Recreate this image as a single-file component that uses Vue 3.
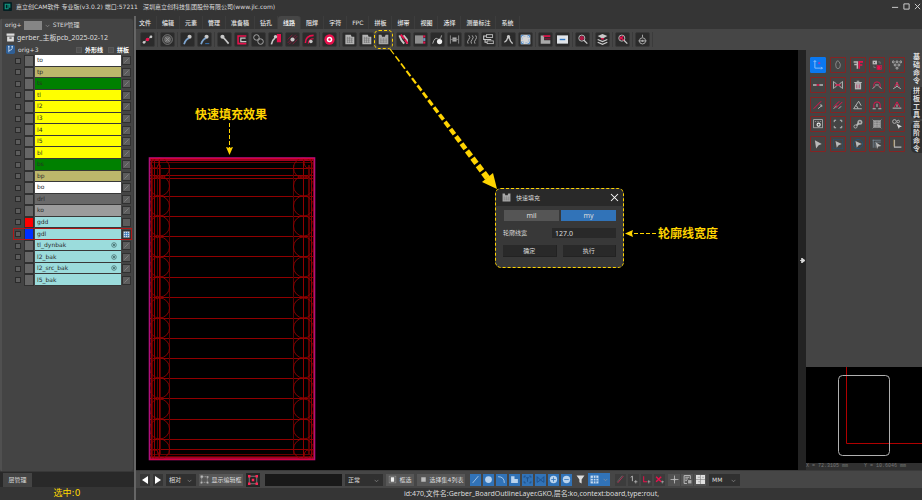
<script setup>
import { ref } from 'vue'

const menus = ['文件', '编辑', '元素', '管理', '准备稿', '钻孔', '线路', '阻焊', '字符', 'FPC', '拼板', '绑带', '视图', '选择', '测量标注', '系统']
const activeMenu = ref('线路')

const W = '#c8c8c8'
const G = '#8c8c8c'
const R = '#e8104c'
const B = '#7fa6d0'

const line = (d, c = W, w = 1.4) => `<path d="${d}" fill="none" stroke="${c}" stroke-width="${w}"/>`
const fill = (d, c = W) => `<path d="${d}" fill="${c}"/>`
const dot = (x, y, r, c = W) => `<circle cx="${x}" cy="${y}" r="${r}" fill="${c}"/>`
const ring = (x, y, r, c = W, w = 1.4) => `<circle cx="${x}" cy="${y}" r="${r}" fill="none" stroke="${c}" stroke-width="${w}"/>`
const box = (x, y, w, h, c = W) => `<rect x="${x}" y="${y}" width="${w}" height="${h}" fill="${c}"/>`
const frame = (x, y, w, h, c = W, s = 1.2) => `<rect x="${x}" y="${y}" width="${w}" height="${h}" fill="none" stroke="${c}" stroke-width="${s}"/>`

const gridBoard = fill('M2 1h8l1 3h4v11H2z', '#b4b4b4') + line('M5 4v9M8 4v9M11 6v7M4 6h9M4 9h9M4 12h9', '#6c6c6c', 0.8)
const fillBoard = fill('M1 1h4l1 3h4l1-3h4v14H1z', '#a8a8a8') + line('M4 6v7M8 6v7M12 6v7M3 9h10M3 12h10', '#777', 0.7)
const lens = (c) => ring(7, 6, 4.4, W, 1.3) + line('M10 9l5 5', W, 1.8) + c

const toolGroups = [
  [{ n: '连线', i: line('M2 13L14 3', W, 1.2) + dot(3, 12, 2) + dot(13, 4, 2) + dot(8, 8, 2.6, R) }],
  [{ n: '禁用', i: ring(8, 8, 7, G, 1.2) + dot(8, 8, 5, '#6c6c6c') + line('M5 5l6 6M11 5l-6 6', '#999', 1.2) }],
  [
    { n: '线加宽', i: dot(11, 4, 3) + line('M10 6Q5 8 3 15', B, 2.4) },
    { n: '线减细', i: dot(11, 4, 3) + line('M10 6Q5 8 3 15', B, 2.4) + line('M9 14h6', '#3678bd') }
  ],
  [
    { n: '移线', i: dot(5, 4, 3) + line('M6 5Q9 8 14 14', W, 2.4) },
    { n: '包边', i: line('M15 3H3v11h12', R, 2.2) + line('M14 6H7v5h8', W, 1.8) },
    { n: '相交', i: ring(5, 5, 4, '#aaa') + ring(11, 11, 4, '#aaa') + line('M6 10l4-4', G) },
    { n: '削线', i: box(10, 0, 6, 12, R) + dot(8, 4, 2.5) + line('M7 6Q3 9 2 15', W, 2.4) },
    { n: '等距', i: line('M1 8L8 1M1 13L13 1M3 15L15 3M8 15l7-7', '#a31643', 1) + dot(8, 8, 3) },
    { n: '弧线', i: line('M2 13Q2 2 14 2', R, 2.2) + line('M6 14Q7 7 14 7', R, 1.5) + dot(10, 11, 2.6) }
  ],
  [{ n: '焊环', i: dot(8, 8, 7.5, R) + dot(8, 8, 4, '#fff') + dot(8, 8, 1.8, R) }],
  [{ n: '网格铺铜', i: gridBoard }, { n: '铺铜', i: gridBoard }, { n: '快速填充', i: fillBoard, on: true }],
  [
    { n: '线夹', i: line('M2 2l3 7 4 5M8 2l5 6v6', W, 2.8) + line('M4 1l5 6M10 8l4 6', R, 2.8) },
    { n: '填实', i: box(0, 2, 12, 12, '#8f8f8f') + box(12, 2, 3, 3, R) + box(12, 11, 3, 3, R) + box(12, 6, 3, 4, '#7298c6') },
    { n: '泪滴', i: line('M1 14Q4 4 8 7T14 2', '#aaa') + dot(11, 11, 3.8, '#eee') },
    { n: '间距', i: line('M2 2v12M14 2v12', G) + box(5, 5, 6, 6, '#aaa') + line('M2 8h12', G, 1) },
    { n: '蛇形', i: line('M4 2q3 3 0 6t-1 6M9 2q3 3 0 6t-1 6M14 2q3 3 0 6t-1 6', '#aaa') },
    { n: '补偿', i: frame(5, 1, 9, 4) + frame(6, 10, 9, 4) + line('M5 3H1v5h11M3 8v4h3', '#ccc', 1.6) }
  ],
  [
    { n: '测距', i: dot(8, 4, 2.4) + line('M7 5Q6 10 2 12M9 5q1 6 5 9', W, 2) },
    { n: '轮廓', i: box(1, 1, 14, 14, '#d5d5d5') + '<circle cx="8" cy="8" r="5" fill="none" stroke="#8bb0da" stroke-width="1.400" stroke-dasharray="3 2"/>' + line('M2 5V2h3M11 2h3v3M14 11v3h-3M5 14H2v-3', '#4585c9') }
  ],
  [
    { n: '切角', i: fill('M1 2h5v7h9v5H1z', '#a9a9a9') + line('M5 3h10', R, 2.4) + line('M7 7h8', '#7d1a38', 2) },
    { n: '减除', i: box(0, 2, 16, 12, '#e1e5ea') + box(4, 7, 8, 2, '#2f78c4') }
  ],
  [{ n: '查找', i: lens(dot(7, 6, 3, '#b01845')) }],
  [{ n: '层叠', i: fill('M8 0l7 3-7 4-7-4z') + line('M1 8l7 3 7-3M1 12l7 3 7-3', '#ccc', 1.8) + box(6, 6, 4, 2, R) }],
  [{ n: '检查', i: lens(line('M4 4l6 5M4 8l5-5', R, 2)) }],
  [{ n: '机器人', i: ring(8, 10, 4.5, '#aaa') + line('M8 1v4M2 10h12', '#aaa') + dot(8, 10, 1.6, '#aaa') }]
]

const bud = '#b8b8b8'
const sideTools = [
  { n: '原点', on: true, i: line('M3 1v12h12M1 3l2-2 2 2M13 11l2 2-2 2', '#a9d1ff', 1.2) + dot(10, 5, 1.8, '#a13bb0') },
  { n: '旋转', i: line('M6 2Q3 6 5 12q3 4 6 0 2-5-1-9-2-3-4-1', '#999', 1.2) },
  { n: '镜像', i: line('M1 3h6M2 7h5M7 2v12', bud, 2.4) + line('M10 14V3h6M10 8h5', R, 2.6) },
  { n: '复制', i: box(1, 1, 7, 6, bud) + dot(4, 4, 1, '#444') + dot(11, 12, 3, R) + frame(8, 9, 7, 6, R, 1) + line('M10 3h3v3M3 9v3h3', G, 1) },
  { n: '阵列', i: ring(2, 3, 1.6, bud) + ring(8, 3, 1.6, bud) + ring(14, 3, 1.6, bud) + ring(5, 8, 1.6, bud) + ring(11, 8, 1.6, bud) + ring(8, 13, 1.6, bud) },
  { n: '断开', i: line('M0 8h6M10 8h6', bud, 2.4) + line('M6 8h4', R, 2.4) },
  { n: '连接', i: line('M1 2v12M15 2v12M2 3l5 5-5 5M14 3L9 8l5 5', bud, 1.6) + line('M4 8h8', R, 2.2) },
  { n: '删除', i: line('M2 4h12M6 2h4', bud, 1.8) + box(3, 5, 10, 10, bud) + line('M6 7v6M10 7v6', '#b0446a', 1.4) },
  { n: '弧形', i: line('M3 12V7q0-4 5-4t5 4v5', R, 1.4) + line('M1 14l4-4M15 14l-4-4M5 8h6', bud, 1.4) },
  { n: '尖角', i: line('M2 14l6-4 6 4M8 3v6', bud, 1.5) + line('M4 11l4-7 4 7', R, 1.4) },
  { n: '延伸', i: line('M1 14L13 2', R, 1.6) + line('M8 14l6-5M11 8h3v3', bud, 1.5) },
  { n: '平行', i: line('M1 11L10 2M5 13L15 3', R, 1.6) + line('M1 14l5-5M9 14l4-4', bud, 1.5) },
  { n: '角度', i: line('M14 14H1L9 2l4 7M8 14q0-4-4-5', bud, 1.5) },
  { n: '圆角', i: line('M3 13V7q0-4 5-4t5 4v6', R, 1.5) + line('M1 14h5M10 14h5M8 6v5', bud, 1.6) },
  { n: '三角', i: line('M3 12l5-9 5 9', R, 1.5) + line('M1 13h14M8 7v4', bud, 1.6) },
  { n: '截图', i: frame(1, 1, 14, 13, bud, 1.2) + ring(9, 9, 2.5, '#eee', 1.8) + line('M3 4h2M7 4h2M11 4h2', bud, 1) },
  { n: '全屏', i: line('M2 5V2h3M11 2h3v3M14 11v3h-3M5 14H2v-3', bud, 1.6) },
  { n: '胶囊', i: dot(11, 5, 4, '#aaa') + ring(4, 12, 2.5, bud) + line('M6 10L11 5', bud, 3) + dot(11, 5, 1.6, '#555') },
  { n: '网框', i: box(3, 3, 10, 10, '#777') + frame(3, 3, 10, 10, bud, 1.4) + line('M1 1l3 3M15 1l-3 3M1 15l3-3M15 15l-3-3M6 3v10M10 3v10M3 7h10M3 10h10', bud, 0.9) },
  { n: '查看选择', i: ring(4, 4, 3, bud) + ring(10, 4, 2, bud) + fill('M7 7l9 5-4 1-1 3z', '#d8d8d8') },
  { n: '选择', i: fill('M3 2l11 6-5 2-4 5z', bud) },
  { n: '框选', i: frame(0, 0, 16, 16, '#24537b', 1.4) + fill('M4 3l10 5-5 2-3 4z', bud) },
  { n: '圈选', i: ring(8, 8, 7.4, '#24537b', 1.4) + fill('M4 3l10 5-5 2-3 4z', bud) },
  { n: '线选', i: line('M1 2h13M2 1v13M5 5h9M5 5v9', '#8298aa', 1) + fill('M6 5l9 6-5 1-2 4z', bud) },
  { n: '直角', i: line('M4 1v12h11', bud, 1.8) + line('M3 1v11', '#a68a4c', 1.2) }
]
const sideTabs = ['基础命令', '拼板工具', '高阶命令']

const layers = [
  { n: 'to', c: 'white' }, { n: 'tp', c: 'paste' }, { n: 'ts', c: 'mask' },
  { n: 'tl', c: 'copper' }, { n: 'l2', c: 'copper' }, { n: 'l3', c: 'copper' },
  { n: 'l4', c: 'copper' }, { n: 'l5', c: 'copper' }, { n: 'bl', c: 'copper' },
  { n: 'bs', c: 'mask' }, { n: 'bp', c: 'paste' }, { n: 'bo', c: 'white' },
  { n: 'drl', c: 'drill' }, { n: 'ko', c: 'keep' },
  { n: 'gdd', c: 'aux', s: 'red', e: 'none' }, { n: 'gdl', c: 'aux', s: 'blue', e: 'grid', cur: true },
  { n: 'tl_dynbak', c: 'aux', eye: true }, { n: 'l2_bak', c: 'aux', eye: true },
  { n: 'l2_src_bak', c: 'aux', eye: true }, { n: 'l5_bak', c: 'aux' }
]

const D = '#1d4d86'
const L = '#b9d3ee'
const filters = [
  { n: '线', i: line('M3 14L13 2', L, 1.4) },
  { n: '焊盘', i: dot(8, 8, 6, L) },
  { n: '弧', i: line('M2 3q11 0 11 11', L, 1.5) },
  { n: '面', i: fill('M2 2h6v5h6v7H2z', L) },
  { n: '文字', i: line('M2 5V2h3M11 2h3v3M14 11v3h-3M5 14H2v-3M5 5h6M8 5v7', D, 1.5) },
  { n: '网络', i: line('M2 13V3l6 6 6-6v10M2 13l6-4 6 4', D, 1.5) },
  { n: '正', i: dot(8, 8, 6.5, L) + line('M8 4v8M4 8h8', '#3173b8', 1.4) },
  { n: '负', i: dot(8, 8, 6.5, L) + line('M4 8h8', '#3173b8', 1.4) }
]
const snaps = [
  { n: '吸附线', i: line('M3 14L13 2', '#c2305a', 1.5) + line('M2 12L11 1', G, 0.8) },
  { n: '吸附点', i: line('M3 4l3-2v9', W, 1.5) + line('M9 12h6M12 9v6', W, 1.2) },
  { n: '吸附角', i: line('M3 2v10h6', R, 1.8) + line('M10 12h5M12 9v6', W, 1) },
  { n: '取消吸附', i: line('M2 3l9 9M11 3l-9 9', R, 2.6) + line('M11 12h5M13 10v5', W, 1) }
]

const rungs = [168, 175, 178, 196, 216, 236, 256, 277, 297, 318, 338, 358, 378, 398, 419, 439, 449]
const centers = [168, 186, 206, 226, 247, 267, 287, 308, 328, 348, 368, 388, 409, 429, 449]
const railsStrong = [151, 154, 159, 303, 311, 313]
const railsFaint = [152, 157, 160, 169, 293, 308, 309]

// Dashes of the callout arrow grow wider toward its head.
const from = { x: 390, y: 49 }
const to = { x: 489, y: 180 }
const dashCount = 18
const dashes = Array.from({ length: dashCount }, (_, k) => {
  const at = (t) => ({ x: from.x + (to.x - from.x) * t, y: from.y + (to.y - from.y) * t })
  const a = at(k / dashCount)
  const b = at((k + 0.72) / dashCount)
  return { a, b, w: 1.2 + (k / dashCount) * 5 }
})

const unit = ref('my')
const width = ref('127.0')
const sideTab = ref('基础命令')
</script>

<template>
  <div class="app">
    <header class="titlebar">
      <svg class="logo" viewBox="0 0 16 16"><rect width="16" height="16" rx="2" fill="#041f22" /><path d="M4 4h5v8H4zM10 4h2v6" fill="none" stroke="#129a83" stroke-width="2" /></svg>
      <span class="product">嘉立创CAM软件 专业版(v3.0.2) 端口:57211</span>
      <span>深圳嘉立创科技集团股份有限公司(www.jlc.com)</span>
      <div class="window-buttons">
        <button aria-label="最小化"><svg viewBox="0 0 8 8"><path d="M0 5h7" /></svg></button>
        <button aria-label="最大化"><svg viewBox="0 0 8 8"><path d="M1 1h6v6H1z" /></svg></button>
        <button aria-label="关闭"><svg viewBox="0 0 8 8"><path d="M1 1l6 6M7 1L1 7" /></svg></button>
      </div>
    </header>

    <div class="body">
      <aside class="left">
        <div class="panel">
          <div class="step-row">
            <span>orig+</span><i class="step-color"></i>
            <svg class="chev" viewBox="0 0 8 8"><path d="M1 3l3 3 3-3" /></svg>
            <a class="step-link" href="#">STEP管理</a>
          </div>
          <div class="job-row">
            <svg class="row-icon" viewBox="0 0 16 16"><path d="M1 1h14v4H1zM2 6h12v9H2z" fill="#ddd" /><path d="M6 9h4" stroke="#444" stroke-width="2" /></svg>
            <span>gerber_主板pcb_2025-02-12</span>
          </div>
          <div class="board-row">
            <svg class="row-icon" viewBox="0 0 16 16"><rect width="16" height="16" rx="3" fill="#2f5f96" /><path d="M5 4v9M11 4v2q0 3-6 4" fill="none" stroke="#c8dcf2" stroke-width="1.5" /><circle cx="5" cy="3" r="1.5" fill="#c8dcf2" /><circle cx="11" cy="3" r="1.5" fill="#c8dcf2" /></svg>
            <span class="board-name">orig+3</span>
            <label><input type="checkbox" class="tick">外形线</label>
            <label><input type="checkbox" class="tick">拼板</label>
          </div>
          <ul class="layers">
            <li v-for="l in layers" :key="l.n" :class="{ current: l.cur }">
              <input type="checkbox" class="tick" :aria-label="l.n">
              <i class="swatch" :class="l.s"></i>
              <button class="layer-name" :class="l.c">{{ l.n }}
                <svg v-if="l.eye" viewBox="0 0 12 12"><circle cx="6" cy="6" r="4.6" fill="none" stroke="#2f5050" stroke-width="1.2" /><circle cx="6" cy="6" r="1.8" fill="#2f5050" /></svg>
              </button>
              <svg class="layer-end" viewBox="0 0 10 10">
                <path v-if="!l.e" d="M2 8l6-6" stroke="#8c8c8c" />
                <path v-if="l.e === 'grid'" d="M1 1h8v8H1z" fill="#d7e8f8" />
                <path v-if="l.e === 'grid'" d="M1 3.5h8M1 6.5h8M3.5 1v8M6.5 1v8" stroke="#2f6fb0" />
              </svg>
            </li>
          </ul>
        </div>
        <div class="left-tabs"><button>层管理</button></div>
        <div class="selected">选中:0</div>
      </aside>

      <main class="right">
        <nav class="menu">
          <button v-for="m in menus" :key="m" :class="{ active: m === activeMenu }" @click="activeMenu = m">{{ m }}</button>
        </nav>
        <div class="toolbar">
          <div v-for="(g, gi) in toolGroups" :key="gi" class="tool-group">
            <button v-for="t in g" :key="t.n" :aria-label="t.n" :class="{ marked: t.on }"><svg viewBox="0 0 16 16" v-html="t.i"></svg></button>
          </div>
        </div>

        <div class="workspace">
          <section class="canvas">
            <svg class="scene" width="662" height="420" viewBox="136 50 662 420">
              <g fill="none" shape-rendering="crispEdges">
                <path v-for="y in rungs" :key="'r' + y" :d="`M150 ${y}.5H314`" stroke="#900000" />
                <path d="M150 160h164M150 458h164" stroke="#a00020" stroke-width="2" />
                <path d="M150 162.500h164M150 454.500h164M150 456.500h164" stroke="#640000" />
                <path v-for="x in railsStrong" :key="'s' + x" :d="`M${x}.5 159V459`" stroke="#900000" />
                <path v-for="x in railsFaint" :key="'f' + x" :d="`M${x}.5 165V454`" stroke="#5c0000" />
              </g>
              <g fill="none" stroke="#900000" stroke-width="0.9">
                <template v-for="y in centers" :key="'c' + y">
                  <circle cx="159.500" :cy="y" r="10" />
                  <circle cx="303.500" :cy="y" r="10" />
                </template>
                <path d="M150 168h5q4 0 4-8M314 168h-6q-4 0-4-8M150 450h5q4 0 4 8M314 450h-6q-4 0-4 8" />
              </g>
              <rect x="149.500" y="158" width="165" height="301.500" fill="none" stroke="#b0107c" stroke-width="1.600" />
              <path d="M150 158.500h164M150 459.500h164" stroke="#d8003c" />

              <g class="callout">
                <path d="M229.500 123V148" stroke-dasharray="4 2" stroke-width="1" fill="none" stroke="#ffd400" />
                <path d="M226 147l3.500 1 3.500-1-3.500 8z" />
                <path d="M656 233.500H632" stroke-dasharray="4 2" stroke-width="1" fill="none" stroke="#ffd400" />
                <path d="M633 230l-1 3.500 1 3.500-8-3.500z" />
                <line v-for="(d, k) in dashes" :key="k" :x1="d.a.x" :y1="d.a.y" :x2="d.b.x" :y2="d.b.y" :stroke-width="d.w" stroke="#ffd400" />
                <path d="M497 189L482 182L493 173z" />
                <text x="195" y="119">快速填充效果</text>
                <text x="658" y="238">轮廓线宽度</text>
              </g>
            </svg>

            <form class="dialog" @submit.prevent>
              <header><svg viewBox="0 0 16 16" v-html="fillBoard"></svg><span>快速填充</span>
                <button type="button" class="close" aria-label="关闭"><svg viewBox="0 0 8 8"><path d="M0 0l8 8M8 0L0 8" /></svg></button>
              </header>
              <div class="dialog-body">
                <div class="units">
                  <button type="button" :class="{ on: unit === 'mil' }" @click="unit = 'mil'">mil</button>
                  <button type="button" :class="{ on: unit === 'my' }" @click="unit = 'my'">my</button>
                </div>
                <div class="field"><label for="outline-width">轮廓线宽</label><input id="outline-width" v-model="width" type="text"></div>
                <div class="actions"><button>确定</button><button>执行</button></div>
              </div>
            </form>
          </section>
          <button class="splitter" aria-label="折叠面板"><svg viewBox="0 0 6 6"><path d="M0 3h3M2 0l4 3-4 3z" /></svg></button>
          <aside class="side">
            <div class="side-top">
              <div class="side-grid">
                <button v-for="t in sideTools" :key="t.n" :aria-label="t.n" :class="{ on: t.on }"><svg viewBox="0 0 16 16" v-html="t.i"></svg></button>
              </div>
              <div class="side-tabs">
                <button v-for="t in sideTabs" :key="t" :class="{ active: t === sideTab }" @click="sideTab = t">{{ t }}</button>
              </div>
            </div>
            <svg class="overview" viewBox="0 0 116 96" preserveAspectRatio="xMinYMin">
              <path d="M40.500 0V76.500H116" fill="none" stroke="#b00000" />
              <rect x="32.500" y="8.500" width="51" height="80" rx="4" fill="none" stroke="#b0b0b0" />
            </svg>
            <div class="coords"><span>X = 72.3105 mm</span><span>Y = 10.6046 mm</span></div>
          </aside>
        </div>

        <div class="bottombar">
          <button class="arrow" aria-label="上一个"><svg viewBox="0 0 8 8"><path d="M7 0v8L1 4z" /></svg></button>
          <button class="arrow" aria-label="下一个"><svg viewBox="0 0 8 8"><path d="M1 0v8l6-4z" /></svg></button>
          <div class="select mode"><select aria-label="坐标模式"><option>相对</option></select><svg class="chev" viewBox="0 0 8 8"><path d="M1 3l3 3 3-3" /></svg></div>
          <button class="text-button edit-box"><svg viewBox="0 0 16 16"><path d="M3 3h10v10H3z" fill="none" stroke="#bbb" stroke-dasharray="2 1" /><path d="M1 1h4v4H1zM12 2h3v3h-3zM12 12h3v3h-3zM1 12h3v3H1z" fill="#bbb" /></svg>显示编辑框</button>
          <button class="frame-button" aria-label="编辑框"><svg viewBox="0 0 16 16"><path d="M2 2h12v12H2z" fill="none" stroke="#aaa" /><path d="M0 0h4v4H0zM12 0h4v4h-4zM12 12h4v4h-4zM0 12h4v4H0zM6 6h4v4H6z" fill="#ff2455" /></svg></button>
          <input class="command" type="text" aria-label="命令">
          <div class="select state"><select aria-label="状态"><option>正常</option></select><svg class="chev" viewBox="0 0 8 8"><path d="M1 3l3 3 3-3" /></svg></div>
          <button class="text-button pick"><svg viewBox="0 0 16 16"><rect x="2" y="2" width="12" height="12" fill="none" stroke="#999" /><rect x="5" y="4" width="6" height="8" fill="#eee" /></svg>框选</button>
          <button class="text-button pick-set"><svg viewBox="0 0 16 16"><rect x="4" y="4" width="8" height="8" fill="#bbb" /></svg>选择集4列表</button>
          <div class="filters"><button v-for="f in filters" :key="f.n" :aria-label="f.n"><svg viewBox="0 0 16 16" v-html="f.i"></svg></button></div>
          <button class="plain" aria-label="过滤"><svg viewBox="0 0 16 16"><path d="M1 1h14l-5 7v7l-4-2V8z" fill="#ddd" /></svg></button>
          <button class="grid-select" aria-label="网格"><svg viewBox="0 0 16 16"><path d="M1 1h14v14H1z" fill="#c7dcf2" /><path d="M6 1v14M10.500 1v14M1 6h14M1 10.500h14" stroke="#3173b8" stroke-width="1.500" /></svg><svg class="chev" viewBox="0 0 8 8"><path d="M1 3l3 3 3-3" /></svg></button>
          <div class="snaps"><button v-for="s in snaps" :key="s.n" :aria-label="s.n"><svg viewBox="0 0 16 16" v-html="s.i"></svg></button></div>
          <div class="extras">
            <button aria-label="十字"><svg viewBox="0 0 16 16"><path d="M8 1v14M1 8h14" stroke="#bbb" stroke-width="1.500" /><circle cx="8" cy="8" r="2" fill="#bbb" /></svg></button>
            <button aria-label="列表"><svg viewBox="0 0 16 16"><path d="M13 7V1H2v14h5M4 4h7M4 7h5M4 10h3" fill="none" stroke="#ccc" stroke-width="1.500" /><path d="M9 9h6v6H9z" fill="#aaa" /></svg></button>
            <button aria-label="拼图"><svg viewBox="0 0 16 16"><path d="M0 0h16v16H0z" fill="#e0e0e0" /><path d="M8 0v16M0 8h16M3 4h4M11 4h3M4 12h3" stroke="#777" /></svg></button>
          </div>
          <div class="select units-select"><select aria-label="单位"><option>MM</option></select><svg class="chev" viewBox="0 0 8 8"><path d="M1 3l3 3 3-3" /></svg></div>
        </div>
        <footer class="status">id:470,文件名:Gerber_BoardOutlineLayer.GKO,层名:ko,context:board,type:rout,</footer>
      </main>
    </div>
  </div>
</template>

<style>
body { margin: 0; background: #353535; }
</style>

<style scoped>
.app { min-height: 100vh; display: flex; flex-direction: column; background: #353535; color: #dcdcdc; font: 6px/8px "DejaVu Sans", "Noto Sans CJK SC", sans-serif; overflow: hidden; }
.app * { box-sizing: border-box; }
button, input, select { font: inherit; color: inherit; border: 0; padding: 0; margin: 0; background: none; appearance: none; border-radius: 0; }
button { display: flex; align-items: center; justify-content: center; white-space: nowrap; }
svg { display: block; flex: none; }
a { color: inherit; text-decoration: none; }
.chev { width: 5px; height: 5px; fill: none; stroke: #999; }

.titlebar { height: 16px; display: flex; align-items: center; padding: 0 1px 3px 2px; white-space: nowrap; }
.logo { width: 9px; height: 9px; margin: 0 4px 0 1px; }
.product { width: 127px; flex: none; }
.window-buttons { margin-left: auto; display: flex; gap: 4px; }
.window-buttons svg { width: 7px; height: 7px; fill: none; stroke: #ddd; }

.body { flex: 1; display: flex; min-height: 0; }
.left { width: 136px; flex: none; display: flex; flex-direction: column; border-right: 2px solid #666; }
.panel { flex: 1; background: #444; border: 1px solid #383838; border-left: 2px solid #505050; border-radius: 3px; margin-top: 2px; }
.step-row { display: flex; align-items: center; height: 12px; padding: 0 3px; }
.step-color { width: 18px; height: 9px; background: #858585; margin: 0 3px 0 2px; }
.step-link { margin-left: 3px; }
.job-row, .board-row { display: flex; align-items: center; height: 13px; padding: 0 4px; gap: 2px; white-space: nowrap; }
.job-row { font-family: "Noto Sans", "Noto Sans CJK SC", sans-serif; font-size: 7px; }
.board-row { height: 11px; gap: 3px; }
.row-icon { width: 9px; height: 9px; }
.board-name { flex: 1; }
.board-row label { display: flex; align-items: center; gap: 3px; font-weight: bold; margin-left: 2px; color: #fff; }
.tick { width: 6px; height: 6px; background: #505050; border: 1px solid #2c2c2c; flex: none; }
.board-row .tick { border-color: #5a5a5a; }
.layers { list-style: none; margin: 0; padding: 0 1px 0 11px; height: 231px; display: grid; grid-auto-rows: 1fr; }
.layers li { display: flex; align-items: stretch; outline-offset: -1px; gap: 1px; padding: 0 1px 0 2px; }
.layers li.current { outline: 1px solid #b01818; }
.layers .tick { align-self: center; margin-right: 2px; border-color: #2a2a2a; background: #5c5c5c; }
.swatch { width: 10px; background: #666; border: 1px solid #303030; }
.swatch.red { background: #f00; }
.swatch.blue { background: #0030ff; }
.layer-name { flex: 1; justify-content: space-between; padding: 0 4px 0 2px; color: #2b2b2b; border-bottom: 1px solid #383838; }
.layer-name svg { width: 6px; height: 6px; }
.layer-name.white { background: #fff; }
.layer-name.paste { background: #bdb76b; }
.layer-name.mask { background: #008000; }
.layer-name.copper { background: #ff0; }
.layer-name.drill { background: #696969; }
.layer-name.keep { background: #9c9c9c; }
.layer-name.aux { background: #9bdcdc; }
.layer-end { width: 9px; height: 9px; align-self: center; background: #5c5c5c; border: 1px solid #303030; }
.left-tabs { height: 15px; background: #292929; display: flex; padding: 1px 3px 0; }
.left-tabs button { width: 29px; background: #444; }
.selected { height: 13px; color: #ffd800; font-size: 9px; line-height: 13px; text-align: center; }

.right { flex: 1; min-width: 0; display: flex; flex-direction: column; }
.menu { height: 13px; display: flex; background: #353535; color: #e6e6e6; }
.menu button { padding: 0 5px; border-right: 1px solid #3d3d3d; font-weight: 500; }
.menu button:first-child { padding-left: 3px; }
.menu button.active { background: #464646; border-radius: 3px 3px 0 0; color: #fff; }
.toolbar { height: 21px; display: flex; align-items: center; gap: 2px; padding-left: 4px; background: #464646; }
.tool-group { display: flex; gap: 2px; padding-right: 2px; border-right: 1px solid #3b3b3b; }
.tool-group button { width: 15px; height: 15px; background: #2b2b2b; border: 1px solid #383838; border-radius: 2px; }
.tool-group svg { width: 11px; height: 11px; }
.tool-group .marked { outline: 1px dashed #ffd400; outline-offset: 1px; border-radius: 3px; }

.workspace { flex: 1; min-height: 0; display: flex; }
.canvas { flex: 1; position: relative; background: #000; }
.scene { position: absolute; left: 0; top: 0; overflow: visible; pointer-events: none; }
.callout { fill: #ffd400; font-size: 12px; font-weight: bold; }

.dialog { position: absolute; left: 359px; top: 138px; width: 129px; border: 1px dashed #ffd400; border-radius: 6px; background: #383838; overflow: hidden; font-family: "Noto Sans", "Noto Sans CJK SC", sans-serif; }
.dialog header { display: flex; align-items: center; height: 17px; padding: 0 5px 0 6px; background: #292929; gap: 5px; }
.dialog header svg { width: 9px; height: 9px; }
.dialog .close { margin-left: auto; }
.dialog .close svg { width: 7px; height: 7px; stroke: #fff; stroke-width: 1.2; overflow: visible; }
.dialog-body { padding: 4px 7px 10px; display: grid; gap: 7px; }
.units { display: grid; grid-template-columns: 1fr 1fr; gap: 2px; padding-left: 1px; font-size: 7px; }
.units button { height: 11px; background: #555; }
.units .on { background: #3173b8; }
.field { display: flex; align-items: center; justify-content: space-between; }
.field input { width: 64px; height: 10px; padding: 0 3px; background: #292929; font-size: 7px; }
.actions { display: grid; grid-template-columns: 1fr 1fr; gap: 6px; }
.actions button { height: 12px; background: #292929; border-right: 1px solid #222; border-bottom: 1px solid #222; }

.splitter { width: 8px; background: #232323; }
.splitter svg { width: 5px; height: 5px; fill: #ddd; stroke: #ddd; }
.side { width: 116px; flex: none; display: flex; flex-direction: column; background: #444; }
.side-top { flex: 1; display: flex; justify-content: space-between; padding: 3px 0 0 4px; }
.side-grid { width: 95px; height: 95px; margin-top: 4px; display: grid; grid-template-columns: repeat(5, 16px); grid-auto-rows: 16px; justify-content: space-between; align-content: space-between; }
.side-grid button { border: 1px solid #862323; border-radius: 1px; }
.side-grid button.on { background: #0a78f0; border-color: #0a78f0; }
.side-grid svg { width: 10px; height: 10px; }
.side-tabs { width: 11px; display: flex; flex-direction: column; gap: 2px; }
.side-tabs button { width: 11px; height: 32px; border-radius: 5px 0 0 5px; background: #303030; font-size: 7px; font-weight: bold; line-height: 8px; white-space: normal; word-break: break-all; padding: 0 2px; }
.side-tabs .active { background: #444; }
.overview { width: 100%; height: 96px; background: #000; }
.coords { height: 7px; background: #303030; color: #777; display: flex; font: 5px/7px "Liberation Mono", monospace; white-space: nowrap; }
.coords span { flex: 1; }

.bottombar { height: 18px; display: flex; align-items: center; background: #464646; padding-left: 4px; gap: 3px; border-top: 1px solid #3a3a3a; }
.bottombar button svg { width: 9px; height: 9px; }
.bottombar .chev { width: 5px; height: 5px; }
.arrow { width: 10px; height: 12px; background: #353535; fill: #fff; }
.bottombar .arrow svg { width: 8px; height: 8px; }
.select { position: relative; height: 12px; background: #303030; flex: none; }
.select select { width: 100%; height: 100%; padding: 0 3px; display: block; }
.select .chev { position: absolute; right: 4px; top: 4px; }
.mode { width: 30px; }
.state { width: 38px; }
.units-select { width: 31px; }
.text-button { height: 12px; background: #575757; gap: 2px; flex: none; }
.edit-box { width: 44px; }
.frame-button { width: 14px; height: 14px; background: #252525; margin-right: 2px; }
.bottombar .frame-button svg { width: 10px; height: 10px; }
.command { width: 77px; height: 12px; background: #191919; flex: none; }
.pick { width: 28px; }
.pick-set { width: 48px; }
.filters { display: flex; gap: 2px; margin-left: 2px; }
.filters button { width: 11px; height: 12px; background: #3173b8; }
.plain { width: 10px; }
.grid-select { width: 22px; height: 13px; background: #3173b8; gap: 4px; }
.snaps { display: flex; gap: 2px; margin-left: 2px; }
.extras { display: flex; gap: 1px; }
.snaps button { width: 11px; height: 12px; background: #3c3c3c; }
.extras button { width: 12px; height: 12px; background: #525252; }
.status { height: 12px; line-height: 11px; padding-left: 268px; background: #353535; white-space: nowrap; font-family: "Noto Sans", "Noto Sans CJK SC", sans-serif; font-size: 7px; }
</style>
